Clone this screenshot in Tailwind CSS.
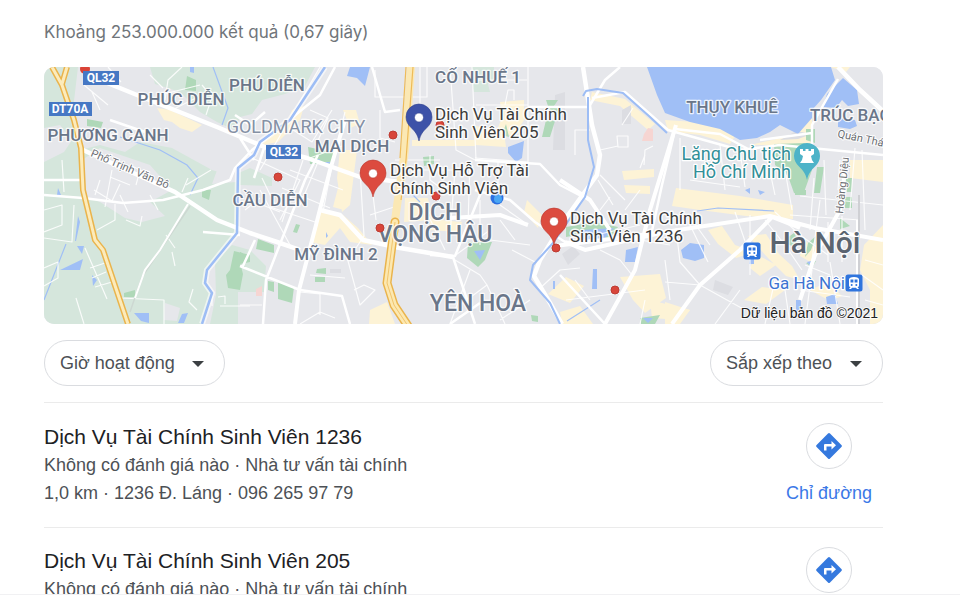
<!DOCTYPE html>
<html lang="vi">
<head>
<meta charset="utf-8">
<meta name="viewport" content="width=device-width, initial-scale=1">
<title>Dịch Vụ Tài Chính Sinh Viên</title>
<script src="https://cdn.jsdelivr.net/npm/@tailwindcss/browser@4"></script>
</head>
<body class="bg-white font-['Liberation_Sans',Arial,sans-serif] text-[#4d5156]">
<main class="h-screen overflow-hidden border-b border-[#f1f1f3] pl-11 pr-[77px] pt-5">
  <p class="font-[Inter,sans-serif] text-[17px] leading-6 text-[#70757a]">Khoảng 253.000.000 kết quả (0,67 giây)</p>

  <section aria-label="Bản đồ" class="mt-[23px] h-[257px] overflow-hidden rounded-[10px] bg-[#e6e7eb]">
    <svg class="block h-full w-full" viewBox="44 67 839 257" preserveAspectRatio="xMidYMid slice" role="img" aria-label="Bản đồ Hà Nội">
      <defs>
        <g id="pin"><path d="M0 19C-1.500 12-4 9.500-8 5.500C-11 2.500-13-.5-13-5A13 13 0 0 1 13-5C13-.5 11 2.500 8 5.500C4 9.500 1.500 12 0 19Z"/><circle cy="-4.500" r="4.500" fill="#fff"/></g>
        <g id="train"><rect x="-8.500" y="-8.500" width="17" height="17" rx="2.500" fill="#2f74dd"/><path fill="#fff" d="M-5-3.500Q-5-6 0-6T5-3.500V2.500Q5 4 3.500 4L5 6H3L2 4.800H-2L-3 6H-5L-3.500 4Q-5 4-5 2.500Z"/><path fill="#2f74dd" d="M-3.500-3.500H-.6V-.5H-3.500ZM.6-3.500H3.500V-.5H.6Z"/><circle cx="-2.300" cy="2" r="1" fill="#2f74dd"/><circle cx="2.300" cy="2" r="1" fill="#2f74dd"/></g>
      </defs>
      <rect x="44" y="67" width="839" height="257" fill="#e6e7eb"/>
      <!-- green land -->
      <g fill="#d5e6dc">
        <path d="M44 67H315L305 86L285 94L262 100L252 114L240 117L228 150L250 168L272 178V186L240 185L238 232L208 268L206 284L213 294L202 324H44Z"/>
        <path d="M215 262L232 245L250 250L266 266L262 324H210L216 295Z"/>
        <path d="M472 67H494V80L488 84L490 92L474 92L470 78Z"/>
      </g>
      <g fill="#e6e7eb">
        <path d="M78 67H120L150 67L155 84L180 92L200 112L217 122L250 137L250 168L232 176L212 170L172 148L140 142L125 152L100 145L80 150L72 118Z"/>
        <path d="M100 148L150 165L172 190L150 202L165 216L142 222L125 218L100 202L84 196L82 160Z"/>
        <path d="M44 128L60 125L72 140L64 152L44 162ZM165 303L180 308L177 321L164 320ZM220 162L238 160L236 182L212 184ZM238 292H265V324H238Z"/>
      </g>
      <!-- built-up yellow areas -->
      <g fill="#fdf3d6">
        <path d="M157 108L170 110L202 125L192 132L180 128L172 122L164 120ZM292 110L304 106L300 120L278 142L262 145L270 132L286 126ZM340 150H357L350 205L342 212L337 178ZM320 210L343 215L358 228L372 245L350 242L340 228L325 245L310 242L316 224ZM338 188L350 192L344 210L333 207ZM343 110H356L360 124L350 128ZM370 310L387 302L395 324H369ZM412 140H475V146H412Z"/>
        <path d="M500 102L524 100V120L514 136L496 132L502 118ZM472 125L504 132L506 147L475 145ZM405 198H428L432 220L404 222ZM430 219L462 222L458 232L430 230ZM592 92L625 99L655 124L648 130L620 106L590 100ZM622 171L654 169V177L624 180ZM624 185L650 186V194L626 193ZM527 200L542 215L538 228L524 212ZM548 294L566 277L584 286L570 303ZM620 277L660 274L666 298L645 313L633 300ZM650 300L690 310L680 320L652 318ZM560 312L580 306L593 324H562Z"/>
        <path d="M665 120L710 123L735 136L730 144L700 135L668 131ZM676 188L740 196L793 205V219L746 216L700 210L672 206ZM708 230L722 226L735 245L755 252L736 258L718 244ZM748 236L766 234L779 254L792 266L800 280L786 276L768 258ZM756 254L776 265L760 276L750 268ZM665 302L690 310L680 324H665ZM744 300L762 287L785 290L766 304ZM803 125L812 118V145H750L790 136ZM830 67H850L846 72ZM850 160H883V182L850 178ZM864 245L883 225V324H870V290L860 270ZM803 240L820 250L812 263L800 256ZM676 190L700 191V200L678 203ZM810 290L828 282L842 296L830 301Z"/>
      </g>
      <!-- grey built blocks -->
      <g fill="#dcdde2"><path d="M555 95L565 92V150H553ZM562 254L573 246L580 254L568 265ZM622 110L631 105V124H622ZM715 280L733 287L728 295L713 290ZM330 269H341V273H330ZM780 140L796 131L812 134L798 139Z"/></g>
      <!-- parks -->
      <g fill="#afd8b8">
        <path d="M187 76L196 80V91L185 90ZM87 119L103 122L101 128L87 126ZM202 190H211L209 200L202 197ZM234 251L250 255L248 262L240 262L243 274L240 290L228 288L226 275L230 270ZM124 293L135 290V297H124ZM258 239L274 245V253L256 249ZM296 224L300 225L297 233L293 232ZM268 281L274 282V292L268 290ZM278 282L294 287L292 303L278 299ZM317 269L326 268V274L316 273ZM315 277H325V282H315ZM240 252L250 256V262L240 264ZM308 147L336 153L332 164H310ZM423 157L434 156V164L424 166Z"/>
        <path d="M546 100H558L554 106L560 110V116L550 112ZM546 120L555 121L550 137H542ZM506 124L509 137L502 135ZM468 242L492 242L485 260L478 267L467 258ZM566 227L595 222L618 227L610 240L582 234L566 237ZM531 315L538 316V322L532 321ZM640 318L660 315L655 324H641Z"/>
        <path d="M774 144L804 143L812 150V170L803 195L794 193L788 176L775 165ZM817 167H824L820 193H814ZM806 129H815V143L806 140ZM845 197H852V208H845ZM840 218L850 226L840 229ZM787 238L794 233L798 240L792 246L787 244ZM795 190H806V195H795ZM845 178H852V192H847ZM816 236L811 250L805 257L808 243ZM806 263L816 261L812 268Z"/>
      </g>
      <path fill="#f6d5d2" d="M648 128L653 129V141H642L644 134ZM256 289L262 286V296H256Z"/>
      <!-- lakes -->
      <g fill="#a0bff6">
        <path d="M647 67H831L835 80L821 100L812 110V118L798 134L780 125L770 132L757 138L740 140L720 129L690 122L665 113L657 95Z"/>
        <path d="M843 78L857 90L859 104L848 106L842 100L836 108L823 107L827 94ZM838 118L855 120L857 126L850 129L838 127Z"/>
        <path d="M350 67H370L365 86L357 78L347 76ZM508 147L524 141L522 158L516 162L508 153ZM626 250L638 247L635 262H625ZM593 269H597V289H592ZM553 281H555V289H553ZM582 230L614 228L604 239L580 239ZM681 250L690 243L704 245V258L695 261L683 258ZM751 252H754V264H749ZM796 300H801V308L796 312ZM826 297L835 294L838 304L827 304ZM807 262L815 260L811 267ZM745 190L750 188V194ZM758 190L765 192L760 195ZM474 251L485 250L480 260Z"/>
        <path d="M60 270L83 259L80 270ZM78 216L80 222L76 241H75ZM92 275L97 280L93 286ZM134 313H149V323L141 321ZM182 314L188 313L184 323H178ZM77 246H84L82 254ZM245 245L250 243ZM190 67H194V73L190 72ZM326 232L328 236L326 238ZM314 160L320 159L318 164ZM325 162H331L327 165ZM58 188L61 195H57ZM643 318H653L648 323Z"/>
      </g>
      <g fill="none" stroke="#a0bff6" stroke-width="1.200"><path d="M66 244L44 300M213 67L228 108L222 125M120 137L160 150L187 165L198 178L190 195M697 211L718 208L774 211M567 321L600 300M408 190L420 202"/></g>

      <!-- local streets -->
      <g fill="none" stroke="#fff" stroke-width="1.200" stroke-opacity=".85" stroke-linejoin="round">
        <path d="M44 210L62 205V225L44 232M44 238L72 242L74 205M85 248L107 299M90 268L108 262M92 278L106 272M95 287L112 282M76 298L84 324M44 268L58 262L58 278L44 286M120 298L164 300V324M97 230L115 220V204M126 220L140 226L142 216M193 289L189 302L197 310M220 306H250M172 252L175 266M218 297L225 296V304M108 67L121 82M165 100L168 80L182 67M62 160L64 192M94 190L112 201L120 184M105 207L112 170M202 85L212 97L206 115M150 75L163 88M160 95L200 85M172 110L196 98M130 137L145 130L145 141M186 185L211 170"/>
        <path d="M375 70V97H427V67M420 67V110M310 110L328 118L316 145M290 128L312 142L332 110M260 170L320 67M252 158L300 180L280 220M303 160L282 222M318 162L300 205M290 170L343 190M282 188L330 208M270 207L315 222M260 190L290 245M360 170L364 236L356 248M332 165L323 212M345 112L332 165M345 145L310 158M395 160H440M370 215L400 205M373 195L376 220M345 250L360 305L375 290L364 285L354 290M310 275L345 278M300 292L320 294V315M300 324L320 312L335 318M240 305H262M330 132L342 126M380 110V138L395 142"/>
        <path d="M472 67L476 160M450 67L456 150L475 160M528 67V162M475 80H527M476 105H528M505 105L508 90H514V100M498 162V190M475 158L528 162M455 170L450 235M470 162L468 225M430 155V180L450 195M412 170H455M440 200L428 215L445 250M480 200V245M500 205L524 222M453 257L490 230M500 220L515 240M490 240L530 245M455 260L480 275L487 285L460 305M470 270L450 324M487 285L505 324M512 250L535 262M530 300L500 320M538 290L560 270L580 268M600 234L640 225M562 240L590 250L602 247M600 250L620 260L632 275M566 300L645 290M575 280L590 300M640 240L670 245M610 197L600 210M640 190L625 210"/>
        <path d="M590 130H575V155M617 136H628V147H618ZM622 125L633 108M600 150L618 146M645 155L640 168M653 146L645 150L644 165M598 180L613 205M600 175L625 200M680 138L680 190M690 180L740 187M720 145L725 190M740 150L745 187M765 148L775 195M785 170L792 210M814 178L810 230M824 160L826 215M840 160L838 190M855 148L850 210M862 150L865 230M800 196L883 205M790 215L860 220M820 200L812 260M750 215L750 275M735 212L748 250M695 224L710 245M690 225L708 262M676 228L680 262L700 285L745 310M700 285L665 282M765 220L785 245L802 270M775 212L800 235L828 255M805 265L830 275M800 290L850 297M828 222V262M842 216V262M775 280L765 324M785 290L790 324M812 270L805 324M830 262L840 324M740 290L715 324M865 260L883 265M862 275L883 290M865 300L883 305M645 300L640 324M665 260L670 300"/>
        <path d="M182 192L188 178M166 235L175 248M212 306V295M245 210L260 198M250 200L280 212M262 178L275 205M92 92L100 110M84 85L108 105M130 165L150 175M140 170L136 185M120 195L128 212M150 195L158 210M110 177L130 185M100 180L95 195"/>
      </g>
      <!-- main streets -->
      <g fill="none" stroke="#fff" stroke-width="2.500" stroke-linejoin="round">
        <path d="M44 195L83 198L123 203L163 200L203 190L230 180L235 168L252 150L283 125L320 95L335 67M203 232L240 235M110 120L145 132M44 180H80M235 115L250 125L265 112M264 148L254 178M263 324L266 280L305 180L318 155M240 266L300 290L342 296L350 324M242 268L255 240M240 138L254 160M372 67L385 112L400 110"/>
        <path d="M528 107L588 107M475 160L540 164L560 185L585 198M590 105L605 80L620 67M592 98L625 92L668 130L740 150L780 145L883 155M675 130L662 185L650 240M675 129L720 134L750 150M812 133L760 140M812 145V125L838 79M475 190L510 200L535 222L565 242L600 241M430 255L455 256L480 195M453 257L475 324M480 303L450 324M605 324L560 275"/>
      </g>
      <g fill="none" stroke="#fff" stroke-linejoin="round">
        <path stroke-width="4.500" d="M100 80L137 95L217 127L267 148L307 158L360 177L400 182M83 150L175 192L217 220L250 233L280 243L300 250M320 210L340 215L363 240L400 248L453 257M583 67L592 125L600 155L597 175L566 218L540 260L534 276L550 303L562 324M838 67L860 90L883 111"/>
        <path stroke-width="4" d="M295 324L299 290L316 225L330 170L345 120M450 218L500 215L528 225M565 242L585 250L665 232L770 216L815 228L883 240M605 324L635 270L650 210L676 125M672 324L700 285L740 250L772 217L800 228M560 180L590 200L610 230M555 246L665 232M800 300L815 255L840 210L846 163M858 220V324"/>
      </g>
      <path fill="none" stroke="#cfd0d4" stroke-width="2" d="M859 195V324"/>
      <path fill="none" stroke="#cdd8d2" stroke-width="1.500" d="M190 206L142 277L130 312"/>
      <path fill="none" stroke="#fff" stroke-width="2" d="M188 204L160 250L145 270L135 298"/>
      <!-- rivers -->
      <path fill="none" stroke="#fff" stroke-width="6" opacity=".6" d="M325 67L290 120L260 142L254 155L238 168L237 233L207 270L205 283L212 293L202 324"/>
      <path fill="none" stroke="#9dbdf5" stroke-width="2.500" stroke-linejoin="round" d="M325 67L290 120L260 142L254 155L238 168L237 233L207 270L205 283L212 293L202 324"/>
      <path fill="none" stroke="#9dbdf5" stroke-width="2" stroke-linejoin="round" d="M583 96L586 91L597 89L623 93L650 117L667 133M588 97V140L594 167L585 197L553 243L533 265L530 280L550 303L560 324"/>
      <!-- highways -->
      <g fill="none" stroke-linejoin="round">
        <path stroke="#eab44c" stroke-width="6" d="M52 67L62 85L74 120L81 148L83 190L95 240L103 250L128 324M67 67L62 84"/>
        <path stroke="#fcebbb" stroke-width="3" d="M52 67L62 85L74 120L81 148L83 190L95 240L103 250L128 324M67 67L62 84"/>
        <path stroke="#fbe8b4" stroke-width="8" d="M411 67L405 150L395 220"/>
        <path stroke="#eebb58" stroke-width="1.200" d="M413 67L406 160L401 200M406 67L400 158"/>
        <path stroke="#eab44c" stroke-width="9" stroke-linecap="round" d="M395 222L387 283L394 305L408 326"/>
        <path stroke="#fce8b0" stroke-width="6" stroke-linecap="round" d="M395 222L387 283L394 305L408 326"/>
        <path stroke="#f1c46d" stroke-width="1" d="M395 222L387 283L394 305L408 326"/>
      </g>

      <!-- place labels -->
      <g class="font-[Roboto,sans-serif] font-medium" text-anchor="middle" fill="#6a7689" stroke="#fff" stroke-width="2.500" stroke-opacity=".8" stroke-linejoin="round" paint-order="stroke">
        <g class="text-[17px]">
          <text x="267" y="91">PHÚ DIỄN</text>
          <text x="181" y="105">PHÚC DIỄN</text>
          <text x="108" y="141">PHƯƠNG CANH</text>
          <text x="352" y="152">MAI DỊCH</text>
          <text x="270" y="206">CẦU DIỄN</text>
          <text x="336" y="260">MỸ ĐÌNH 2</text>
          <text x="478" y="83">CỔ NHUẾ 1</text>
          <text x="732" y="113">THỤY KHUÊ</text>
          <text x="810" y="121" text-anchor="start">TRÚC BẠCH</text>
        </g>
        <text x="296" y="133" class="text-[18px] font-normal" fill="#8591a5">GOLDMARK CITY</text>
        <g class="text-[23px]">
          <text x="435" y="220">DỊCH</text>
          <text x="435" y="242">VỌNG HẬU</text>
          <text x="478" y="311">YÊN HOÀ</text>
        </g>
        <text x="815" y="253" class="text-[30px]" fill="#5b6470">Hà Nội</text>
      </g>
      <g class="font-[Roboto,sans-serif] text-[11px]" fill="#6b6e73" stroke="#fff" stroke-width="2" stroke-linejoin="round" paint-order="stroke">
        <text transform="translate(90 156) rotate(23)">Phố Trịnh Văn Bô</text>
        <text transform="translate(837 137) rotate(12)">Quán Thánh</text>
        <text transform="translate(843 214) rotate(-84)">Hoàng Diệu</text>
      </g>
      <!-- road shields -->
      <g class="font-[Roboto,sans-serif] text-[12px] font-bold" text-anchor="middle" fill="#fff">
        <circle cx="85" cy="69" r="5" fill="#da4337"/>
        <rect x="83" y="71" width="36" height="14" fill="#4678c4"/><text x="101" y="82">QL32</text>
        <rect x="49" y="102" width="43" height="14" fill="#4678c4"/><text x="70" y="113">DT70A</text>
        <rect x="266" y="145" width="35" height="14" fill="#4678c4"/><text x="284" y="156">QL32</text>
      </g>
      <!-- minor results -->
      <g fill="#d8453a" stroke="#bd3b32" stroke-width="1">
        <circle cx="393" cy="135" r="4"/><circle cx="278" cy="177" r="4"/><circle cx="440" cy="125" r="4"/><circle cx="436" cy="196" r="4"/><circle cx="380" cy="228" r="4"/><circle cx="556" cy="248" r="4"/><circle cx="615" cy="290" r="4"/>
      </g>
      <circle cx="497" cy="198" r="6.500" fill="#2b6fe0"/><circle cx="498" cy="199" r="4" fill="#4aa6f3"/>
      <!-- result pins -->
      <use href="#pin" x="419" y="122" fill="#3d52a8" stroke="#31438e" stroke-width=".6"/>
      <use href="#pin" x="373" y="178" fill="#dc4b3f" stroke="#b8382e" stroke-width=".6"/>
      <use href="#pin" x="554" y="226" fill="#dc4b3f" stroke="#b8382e" stroke-width=".6"/>
      <g class="font-[Roboto,sans-serif] text-[17px]" fill="#3c3c3b" stroke="#fff" stroke-width="3" stroke-opacity=".85" stroke-linejoin="round" paint-order="stroke">
        <text x="435" y="120">Dịch Vụ Tài Chính</text><text x="435" y="138">Sinh Viên 205</text>
        <text x="390" y="176">Dịch Vụ Hỗ Trợ Tài</text><text x="390" y="194">Chính Sinh Viên</text>
        <text x="570" y="224">Dịch Vụ Tài Chính</text><text x="570" y="242">Sinh Viên 1236</text>
      </g>
      <!-- landmark -->
      <use href="#pin" x="807" y="161" fill="#4db3c8"/>
      <circle cx="807" cy="156" r="8" fill="#4db3c8"/>
      <path fill="#fff" d="M800 149H803V151H805.500V149H808.500V151H811V149H814V154L811 156L812 160L814 163H800L802 160L803 156L800 154Z"/>
      <g class="font-[Roboto,sans-serif] text-[18px]" text-anchor="end" fill="#318f98" stroke="#fff" stroke-width="2.500" stroke-linejoin="round" paint-order="stroke">
        <text x="791" y="160">Lăng Chủ tịch</text><text x="791" y="178">Hồ Chí Minh</text>
        <text x="845" y="289" class="text-[17px]" fill="#3d74d2">Ga Hà Nội</text>
      </g>
      <use href="#train" x="752" y="251"/>
      <use href="#train" x="854" y="283"/>
      <text x="878" y="318" text-anchor="end" class="font-['Liberation_Sans',Arial,sans-serif] text-[14px]" fill="#222" stroke="#fff" stroke-width="2" stroke-opacity=".7" paint-order="stroke">Dữ liệu bản đồ ©2021</text>
    </svg>
  </section>

  <form class="flex justify-between py-4 text-[18px] text-[#4d5156]">
    <div class="relative">
      <label for="hours" class="sr-only">Giờ hoạt động</label>
      <select id="hours" class="h-[46px] appearance-none rounded-full border border-[#dadce0] bg-white pl-[15px] pr-[49px]"><option>Giờ hoạt động</option></select>
      <svg class="pointer-events-none absolute right-[21px] top-[21px] h-1.5 w-3" viewBox="0 0 12 6" fill="#3c4043"><path d="M0 0H12L6 6Z"/></svg>
    </div>
    <div class="relative">
      <label for="sort" class="sr-only">Sắp xếp theo</label>
      <select id="sort" class="h-[46px] appearance-none rounded-full border border-[#dadce0] bg-white pl-[15px] pr-[49px]"><option>Sắp xếp theo</option></select>
      <svg class="pointer-events-none absolute right-[21px] top-[21px] h-1.5 w-3" viewBox="0 0 12 6" fill="#3c4043"><path d="M0 0H12L6 6Z"/></svg>
    </div>
  </form>

  <ul>
    <li class="flex justify-between border-t border-[#ebebeb] pb-5 pt-5 pr-[11px]">
      <div>
        <h2 class="text-[21px] leading-7 text-[#202124]">Dịch Vụ Tài Chính Sinh Viên 1236</h2>
        <p class="text-[18px] leading-7">Không có đánh giá nào · Nhà tư vấn tài chính<br>1,0 km · 1236 Đ. Láng · 096 265 97 79</p>
      </div>
      <a href="#duong-1236" class="flex flex-col items-center text-[18px] leading-6 text-[#3b78e7]">
        <span class="mb-3 flex size-[46px] items-center justify-center rounded-full border border-[#dadce0]">
          <svg class="size-[26px]" viewBox="0 0 26 26"><path fill="#3579de" d="M12 .6Q13-.4 14 .6L25.400 12Q26.400 13 25.400 14L14 25.400Q13 26.400 12 25.400L.6 14Q-.4 13 .6 12Z"/><path fill="#fff" d="M8 17.500V12Q8 11 9 11H15.500V8L20 12.300L15.500 16.500V13.500H10.500V17.500Z"/></svg>
        </span>
        Chỉ đường
      </a>
    </li>
    <li class="flex justify-between border-t border-[#ebebeb] pb-5 pt-[19px] pr-[11px]">
      <div>
        <h2 class="text-[21px] leading-7 text-[#202124]">Dịch Vụ Tài Chính Sinh Viên 205</h2>
        <p class="text-[18px] leading-7">Không có đánh giá nào · Nhà tư vấn tài chính</p>
      </div>
      <a href="#duong-205" class="flex flex-col items-center text-[18px] leading-6 text-[#3b78e7]">
        <span class="mb-3 flex size-[46px] items-center justify-center rounded-full border border-[#dadce0]">
          <svg class="size-[26px]" viewBox="0 0 26 26"><path fill="#3579de" d="M12 .6Q13-.4 14 .6L25.400 12Q26.400 13 25.400 14L14 25.400Q13 26.400 12 25.400L.6 14Q-.4 13 .6 12Z"/><path fill="#fff" d="M8 17.500V12Q8 11 9 11H15.500V8L20 12.300L15.500 16.500V13.500H10.500V17.500Z"/></svg>
        </span>
        Chỉ đường
      </a>
    </li>
  </ul>
</main>
</body>
</html>
